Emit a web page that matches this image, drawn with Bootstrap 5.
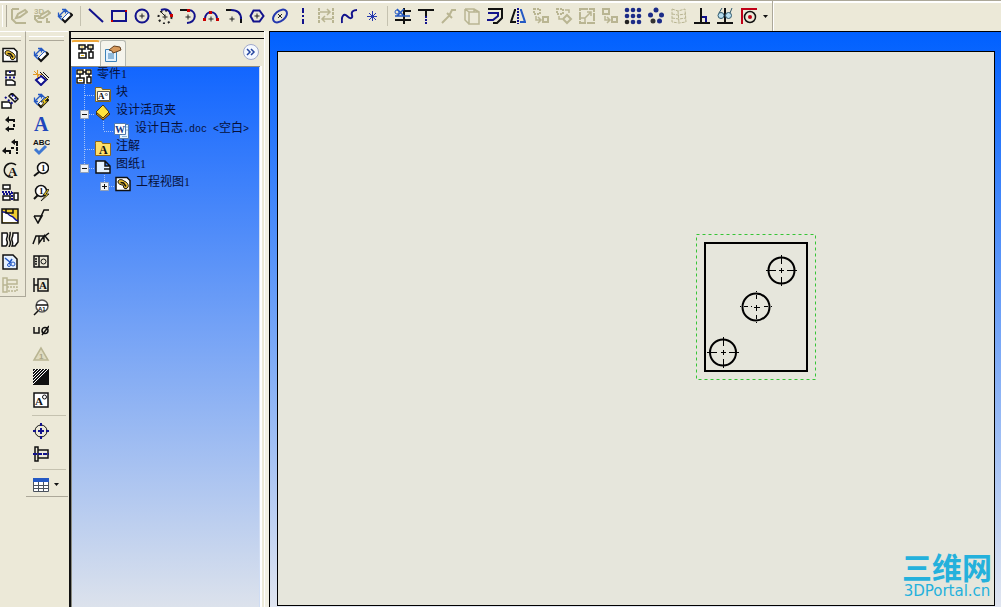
<!DOCTYPE html>
<html lang="zh-CN">
<head>
<meta charset="utf-8">
<meta name="viewport" content="width=device-width, initial-scale=1">
<title>零件1 - 工程图</title>
<link href="https://cdn.jsdelivr.net/npm/bootstrap@5.3.0/dist/css/bootstrap.min.css" rel="stylesheet">
<style>
:root{--face:#ece9d8;--shade:#aca899;--navy:#12128c;--off:#b9b592}
body{background:var(--face);font-family:"Liberation Sans","Noto Sans CJK SC",sans-serif;font-size:12px;color:#000}
svg{display:block;flex:none;fill:none;stroke:#111;stroke-width:1}
.topbar{height:31px;border-top:1px solid var(--shade);box-shadow:inset 0 2px #fff}
.topbar .tools{border-right:1px solid var(--shade);box-shadow:1px 0 #fff;padding-left:2px}
.grip-v{width:5px;border-left:1px solid #fff;border-right:1px solid var(--shade);margin:4px 0}
.grip-h{height:5px;border-top:1px solid #fff;border-bottom:1px solid var(--shade);margin:0 4px 2px 0}
.tool{width:23px;height:23px;padding:0;border:0;border-radius:0;display:flex;align-items:center;justify-content:center;flex:none}
.tool.wide{width:36px;gap:5px}
.rule-v{width:8px;flex:none;background:linear-gradient(#c5c2b0,#c5c2b0) center/1px 20px no-repeat}
.rule-h{height:8px;flex:none;background:linear-gradient(#c5c2b0,#c5c2b0) center/34px 1px no-repeat;width:100%}
.side{padding-top:4px;border-top:1px solid #fff;border-right:1px solid var(--shade);border-bottom:1px solid var(--shade)}
.side.first{width:26px}
.side.first .tool{width:20px}
.side.second{width:42px;padding-left:3px;border-right:0}
.off{stroke:var(--off);color:var(--off)}
.nv{stroke:var(--navy)}
.panel{width:197px;border-top:1px solid #000;border-left:2px solid #111;margin-left:1px;padding-top:6px}
.tabs{height:28px;border-top:1px solid #000;padding:1px 7px 0 0}
.tabs .tab{height:26px;width:26px;padding:0;border:1px solid #b5b8b0;border-bottom:0;border-radius:3px 3px 0 0;display:flex;align-items:center;justify-content:center;background:#f5f4ec}
.tabs .tab.active{width:29px;background:#fff;border-top:2px solid #efa83a;border-color:#efa83a #fff #fff;padding-bottom:5px}
.more{width:16px;height:16px;padding:0;border:0}
.tree-frame{border:solid #8b8b80;border-width:1px 0 0 1px;margin-right:6px;box-shadow:1px 0 #fff,2px 0 #fff}
.tree{background:linear-gradient(#1266ff,#dce2ec);border-right:1px solid #cfdcf3;padding-left:4px}
.tree .node{height:18px;line-height:17px;white-space:nowrap}
.tree .node a{color:#06103a;text-decoration:none;padding-left:5px;height:18px;margin-top:-2px}
.tree .half{font-family:"Liberation Mono",monospace;font-size:10px}
.tree .num{font-family:"Liberation Serif",serif}
.tree button{padding:0;border:0;background:none}
.viewport{border-top:1px solid #000;border-left:1px solid #000;background:linear-gradient(#0060ff,#e0e5f0);padding:19px 6px 1px 7px;margin-left:3px;box-shadow:-4px 0 #f2f0e4,-5px 0 #fff}
.sheet{background:#e6e6dc;border:1px solid #000}
.view{left:418px;top:182px}
.brand{right:2px;bottom:6px;color:#24b1dc;text-align:center}
.brand-cn{font:700 30px/34px "Noto Sans CJK SC",sans-serif}
.brand-en{font:15px/16px "DejaVu Sans",sans-serif}
text{font-family:"Liberation Sans",sans-serif;font-weight:700;stroke:none;fill:#111}
.serif{font-family:"Liberation Serif",serif}
</style>
</head>
<body class="vh-100 d-flex flex-column overflow-hidden">
<svg width="0" height="0" class="d-none" aria-hidden="true">
<symbol id="i-dim" viewBox="0 0 16 16"><path d="M5 11l7-7 3 3-7 7z" fill="#fff" stroke="#2459c4"/><path d="M5 11l3 3 7-7-2-2" stroke-width="2"/><path d="M1.500 8.500l7-7M1.500 8.500v-4M1.500 8.500h3.500M8.500 1.500H5M8.500 1.500v4M1 8l4 4M8 1l4 4" stroke="#2459c4" stroke-width="1.300"/></symbol>
<symbol id="i-sheet" viewBox="0 0 16 15"><path fill="#fff" stroke-width="1.500" d="M1 1h6v4H1zM10 1h5v4h-5zM1 9h7v5H1zM11 8h4v6h-4zM4 5v4M7 3h3M13 5v3"/><path stroke="#d7a700" d="M2.500 3h3M11.500 3h2M3 11.500h3"/></symbol>
<symbol id="i-model" viewBox="0 0 16 16"><path fill="#fff" d="M1 1.500h11l3 3v10H1z" stroke-width="1.500"/><path d="M3 6c0-3 4-3 6-1 3 1 5 4 4 6s-3 2-4 1L8 9C6 9 3 8 3 6z" fill="#ecc136"/><path d="M5.500 6.500l3 .5 2.500 3.500" stroke-width="1.500"/></symbol>
</svg>
<header class="topbar flex-shrink-0 d-flex">
<div class="tools d-flex align-items-center" role="toolbar" aria-label="草图">
<span class="grip-v align-self-stretch"></span>
<button class="btn tool" aria-label="草图"><svg class="off" width="18" height="18"><path stroke-width="2" d="M2 2v10l4 4h10M2 2h7M6 11l2-4 7-4 2 2-7 5z"/></svg></button>
<button class="btn tool" aria-label="3D草图"><svg class="off" width="18" height="18"><text x="1" y="7" font-size="8" style="fill:#b9b592">3D</text><path stroke-width="2" d="M1 9h5M2 9v3l3 3h4M6 11l2-3 7-4 2 2-7 5zM14 11v4h3"/></svg></button>
<button class="btn tool" aria-label="智能尺寸"><svg width="16" height="16"><use href="#i-dim"/></svg></button>
<span class="rule-v align-self-stretch"></span>
<button class="btn tool" aria-label="直线"><svg class="nv" width="16" height="16"><path stroke-width="2" d="M1 1l14 13"/></svg></button>
<button class="btn tool" aria-label="矩形"><svg class="nv" width="16" height="16"><path stroke-width="2" d="M1 3h14v10H1z"/><path fill="#c00" stroke="none" d="M0 12h2v2H0zM14 2h2v2h-2z"/></svg></button>
<button class="btn tool" aria-label="圆"><svg class="nv" width="16" height="16"><circle cx="8" cy="8" r="6.500" stroke-width="2"/><path stroke="#222" d="M5.500 8h5M8 5.500v5"/></svg></button>
<button class="btn tool" aria-label="圆心圆弧"><svg class="nv" width="16" height="16"><circle cx="8" cy="9" r="6.500" stroke="#222" stroke-width="2" stroke-dasharray="2 3"/><path stroke-width="2" d="M4 2c5-2 9 0 10 5"/><path stroke="#222" d="M3 3l5 5M5.500 9h5M8 6.500v5"/><path fill="#c00" stroke="none" d="M13 6h3v3h-3z"/></svg></button>
<button class="btn tool" aria-label="切线弧"><svg class="nv" width="16" height="16"><path stroke="#111" stroke-width="2" d="M0 2h8"/><path stroke-width="2" d="M9 2c8 1 8 12-2 13"/><path stroke="#222" d="M5.500 9h5M8 6.500v5"/><path fill="#c00" stroke="none" d="M7 1h3v3H7z"/></svg></button>
<button class="btn tool" aria-label="三点圆弧"><svg class="nv" width="16" height="16"><path stroke-width="2" d="M2 11c0-9 12-9 12 0"/><path stroke="#222" d="M5.500 11h5M8 8.500v5"/><path fill="#c00" stroke="none" d="M0 10h3v3H0zM13 10h3v3h-3zM6 3h3v3H6z"/></svg></button>
<button class="btn tool" aria-label="圆角"><svg class="nv" width="16" height="16"><path stroke="#111" stroke-width="2" d="M0 2h6M15 9v6"/><path stroke-width="2" d="M5 2c6 0 10 3 10 9"/><path stroke="#222" d="M3.500 11h5M6 8.500v5"/></svg></button>
<button class="btn tool" aria-label="多边形"><svg class="nv" width="16" height="16"><path stroke-width="2" d="M4.500 2.500h6l4 5.500-4 5.500h-6L1.500 8z"/><path stroke="#222" d="M5.500 8h5M8 5.500v5"/></svg></button>
<button class="btn tool" aria-label="椭圆"><svg class="nv" width="16" height="16"><ellipse cx="8" cy="8" rx="8" ry="5" stroke-width="2" stroke="#2438ae" transform="rotate(-40 8 8)"/><path stroke="#222" d="M6 6l4 4M10 6l-4 4"/></svg></button>
<button class="btn tool" aria-label="中心线"><svg class="nv" width="16" height="16"><path stroke-width="2" d="M8 0v16" stroke-dasharray="5 2 2 2"/></svg></button>
<button class="btn tool" aria-label="构造几何线"><svg class="off" width="18" height="18"><path stroke-width="2" d="M2 1v16M16 1v16" stroke-dasharray="3 1"/><path stroke-width="1.500" d="M3 5h10M10 2l3 3-3 3M15 12H5M8 9l-3 3 3 3"/></svg></button>
<button class="btn tool" aria-label="样条曲线"><svg class="nv" width="16" height="16"><path stroke-width="2" d="M1 15C0 8 3 5 6 8s6 3 5-1c-1-3 1-5 5-5"/></svg></button>
<button class="btn tool" aria-label="点"><svg class="nv" width="16" height="16"><path stroke="#2438ae" d="M8.500 3v10M3 8.500h10M5 5l7 7M12 5l-7 7"/></svg></button>
<span class="rule-v align-self-stretch"></span>
<button class="btn tool" aria-label="剪裁实体"><svg class="nv" width="18" height="16"><path stroke="#111" stroke-width="2" d="M10 3h7M1 12h16M10 0v16"/><path stroke="#2459c4" stroke-width="1.500" d="M3 1l7 7M10 1L3 8M1 8h15"/><circle cx="3" cy="4" r="2" stroke="#2459c4"/></svg></button>
<button class="btn tool" aria-label="延伸实体"><svg width="16" height="16"><path stroke-width="2" d="M0 2h16M8 2v6"/><path class="nv" stroke-width="2" d="M8 8v8" stroke-dasharray="2 1"/></svg></button>
<button class="btn tool" aria-label="分割实体"><svg class="off" width="16" height="16"><path stroke-width="2" d="M1 15l7-7 3-6h4M6 5l5 5"/></svg></button>
<button class="btn tool" aria-label="转换实体引用"><svg class="off" width="18" height="18"><path stroke-width="1.500" d="M6 5h10v12H6zM2 2h9l5 3M2 2v11l4 4M2 2l4 3M11 2v3"/></svg></button>
<button class="btn tool" aria-label="等距实体"><svg class="nv" width="18" height="18"><path stroke="#111" stroke-width="2" d="M2 2h14v9l-5 5H7"/><path stroke-width="2" d="M2 6h10v3l-5 4H1"/></svg></button>
<button class="btn tool" aria-label="镜向实体"><svg class="nv" width="16" height="16"><path stroke-width="2" stroke="#2459c4" d="M10 2h1l4 12h-5"/><path stroke="#111" stroke-width="2" d="M6 2H5L1 14h5"/><path stroke-width="2" d="M8 0v16" stroke-dasharray="2 1"/></svg></button>
<button class="btn tool" aria-label="移动实体"><svg class="off" width="18" height="18"><path stroke-width="2" d="M2 2h6v5H2z" stroke-dasharray="2 1"/><path stroke-width="2" d="M11 10h5v5h-5z"/><path stroke-width="1.500" d="M4 9v4h4M6 10l3 3-3 3"/></svg></button>
<button class="btn tool" aria-label="旋转实体"><svg class="off" width="18" height="18"><path stroke-width="2" d="M2 2h6v5H2z" stroke-dasharray="2 1"/><path stroke-width="2" d="M12 8l4 4-4 4-4-4z"/><path stroke-width="1.500" d="M10 3h4v3M4 9v3h3"/></svg></button>
<button class="btn tool" aria-label="缩放实体"><svg class="off" width="18" height="18"><path stroke-width="2" d="M2 2h14v14H2z" stroke-dasharray="8 1"/><path stroke-width="1.500" d="M2 11h5v5M7 11l6-6M9 5h4v4"/></svg></button>
<button class="btn tool" aria-label="复制实体"><svg class="off" width="18" height="18"><path stroke-width="2" d="M2 2h6v5H2zM11 10h5v5h-5z"/><path stroke-width="1.500" d="M4 9v4h4M6 10l3 3-3 3"/></svg></button>
<button class="btn tool" aria-label="线性阵列"><svg width="18" height="18" style="stroke:none;fill:#1c2c88"><circle cx="3" cy="3" r="2.300"/><circle cx="9" cy="3" r="2.300"/><circle cx="15" cy="3" r="2.300"/><circle cx="3" cy="9" r="2.300"/><circle cx="9" cy="9" r="2.300"/><circle cx="15" cy="9" r="2.300"/><circle cx="3" cy="15" r="2.300" fill="#222"/><circle cx="9" cy="15" r="2.300"/><circle cx="15" cy="15" r="2.300"/></svg></button>
<button class="btn tool" aria-label="圆周阵列"><svg width="18" height="18" style="stroke:none;fill:#1c2c88"><circle cx="9" cy="3" r="2.500"/><circle cx="3.500" cy="8" r="2.500"/><circle cx="14.500" cy="8" r="2.500"/><circle cx="6" cy="14" r="2.500" fill="#333"/><circle cx="12.500" cy="14" r="2.500"/></svg></button>
<button class="btn tool" aria-label="修改草图"><svg class="off" width="18" height="18"><path stroke-dasharray="3 1" d="M2 2l6 2 7-2 1 13-7 1-7-1zM8 4l1 12M2 7l6 1 8-1M2 11l7 1 7-1"/></svg></button>
<button class="btn tool" aria-label="添加几何关系"><svg width="18" height="18"><path stroke-width="2" d="M8 1v14M1 16h16"/><path class="nv" stroke="#2459c4" stroke-width="2" d="M9 10h4v5"/></svg></button>
<button class="btn tool" aria-label="显示几何关系"><svg width="18" height="18"><path stroke-width="2" d="M9 1v14M1 16h16"/><circle cx="5" cy="8.500" r="3" fill="#b9dff0" stroke="#31586b"/><circle cx="12.500" cy="8.500" r="3" fill="#b9dff0" stroke="#31586b"/><path stroke="#31586b" d="M3 6l3-5M14 6l2-5"/></svg></button>
<button class="btn tool wide" aria-label="快速捕捉"><svg width="18" height="18"><path stroke="#c00018" stroke-width="2" d="M17 2H2v15"/><circle cx="10" cy="10" r="5.500" stroke-width="1.500"/><circle cx="10" cy="10" r="2" fill="#c00018" stroke="none"/></svg><svg width="5" height="3"><path d="M0 0h5L2.500 3z" fill="#111" stroke="none"/></svg></button>
</div>
</header>
<main class="d-flex flex-grow-1">
<div class="side first align-self-start" role="toolbar" aria-label="工程图">
<div class="grip-h"></div>
<div class="d-flex flex-column">
<button class="btn tool" aria-label="模型视图"><svg width="16" height="16"><use href="#i-model"/></svg></button>
<button class="btn tool" aria-label="投影视图"><svg width="16" height="16"><path fill="#fff" stroke-width="1.500" d="M4 1h9v4H4zM4 10h6l3 2v3H4z"/><path d="M8 1v4M3 7.500h12" class="nv" stroke-width="2" stroke-dasharray="2 2"/></svg></button>
<button class="btn tool" aria-label="辅助视图"><svg width="18" height="16"><path fill="#fff" stroke-width="1.500" d="M8 3l3-3 6 6-3 3zM1 9h7l2 2v4H1z"/><path class="nv" stroke-width="2" stroke-dasharray="2 2" d="M4 4l9 8M11 2l4 4"/></svg></button>
<button class="btn tool" aria-label="剖面视图"><svg width="16" height="16"><path stroke-width="2" d="M5 4h7v9H5" stroke-dasharray="9 2 3 2"/><path d="M7 0v7L3 4zM7 10v6l-4-3z" fill="#111" stroke="none"/></svg></button>
<button class="btn tool" aria-label="旋转剖视图"><svg width="18" height="16"><path stroke-width="2" d="M4 12h4M9 15v-4M10 9h3M16 3v12" stroke-dasharray="4 1"/><path d="M1 12l4-4v7zM10 3l4-3v6zM14 2h3v2h-3z" fill="#111" stroke="none"/></svg></button>
<button class="btn tool" aria-label="局部视图"><svg width="18" height="18"><path stroke-width="1.500" d="M15 4A7 7 0 1 0 12 16"/><text class="serif" x="7" y="15" font-size="13">A</text></svg></button>
<button class="btn tool" aria-label="标准三视图"><svg width="18" height="18"><path fill="#fff" stroke-width="1.500" d="M2 1h7v4H2zM2 12h7v4H2zM13 9h4v7h-4z"/><path class="nv" stroke-width="2" stroke-dasharray="2 1" d="M1 8h10M11 8v9M2 10h8"/></svg></button>
<button class="btn tool" aria-label="断开的剖视图"><svg width="18" height="16"><path fill="#f0cc30" stroke-width="1.500" d="M1 1h16v14H1z"/><path fill="#fff" stroke="none" d="M2 4l6 1 8 7v2H2z"/><path class="nv" stroke-width="1.500" d="M1 4c7-1 5 3 9 4s3 4 7 5"/><path stroke-width="1.500" d="M5 1v4h7V1"/></svg></button>
<button class="btn tool" aria-label="断裂视图"><svg width="18" height="16"><path fill="#fff" stroke-width="1.500" d="M1 2h5c2 4-2 5 0 8 1 3 0 4-1 5H1zM12 2h5v9l-3 4h-3c2-4-1-5 0-8 1-2 1-3 1-5zM9 1c1 4-2 5 0 9 1 3 0 4-1 6"/></svg></button>
<button class="btn tool" aria-label="剪裁视图"><svg width="16" height="16"><path fill="#e6f2ff" stroke-width="1.500" d="M1 1h10l4 4v10H1z"/><path stroke="#2459c4" stroke-width="1.500" d="M3 4l6 5M10 5L7 10"/><circle cx="11" cy="10" r="2" stroke="#2459c4"/><circle cx="7" cy="11" r="1.500" stroke="#2459c4"/></svg></button>
<button class="btn tool" aria-label="交替位置视图"><svg class="off" width="18" height="18"><path stroke-width="1.500" d="M2 2h4v14H2zM2 9h4M6 4h10v4H6z"/><path d="M6 11h10v4H6" stroke-width="1.500" stroke-dasharray="2 1"/></svg></button>
</div>
</div>
<div class="side second align-self-start" role="toolbar" aria-label="注解">
<div class="grip-h"></div>
<div class="d-flex flex-column">
<button class="btn tool" aria-label="智能尺寸标注"><svg width="16" height="16"><use href="#i-dim"/></svg></button>
<button class="btn tool" aria-label="模型项目"><svg width="16" height="16"><path d="M3 10l5-4 5 4-5 5z" fill="#fff" class="nv" stroke-width="2"/><path stroke="#e39a24" d="M4.500 0v8M0 4.500h9M1 1l6 6"/><path d="M7 2l8 8M10 2l6 6"/></svg></button>
<button class="btn tool" aria-label="自动标注尺寸"><svg width="16" height="16"><use href="#i-dim"/><path d="M15 3L8 9h3l-4 6 8-7h-3l4-4z" fill="#ffdc28" stroke-width=".7"/></svg></button>
<button class="btn tool" aria-label="注释"><svg width="18" height="22"><text class="serif" x="2" y="18" font-size="20" style="fill:#2046bc">A</text></svg></button>
<button class="btn tool" aria-label="拼写检验程序"><svg width="18" height="20"><text x="1" y="8" font-size="8">ABC</text><path stroke="#3f78d2" stroke-width="3" d="M3 12l4 4 7-7"/></svg></button>
<button class="btn tool" aria-label="零件序号"><svg width="16" height="18"><circle cx="10" cy="7" r="5.500" stroke-width="1.500" fill="#fff"/><path d="M6 11l-5 4" stroke-width="2"/><text class="serif" x="8" y="10" font-size="9">1</text></svg></button>
<button class="btn tool" aria-label="自动零件序号"><svg width="16" height="18"><circle cx="8" cy="7" r="5.500" stroke-width="1.500" fill="#fff"/><path d="M5 11l-4 4" stroke-width="2"/><text class="serif" x="6" y="10" font-size="9">1</text><path d="M15 5l-5 6h3l-5 6 8-7h-3l3-4z" fill="#ffdc28" stroke-width=".8"/></svg></button>
<button class="btn tool" aria-label="表面粗糙度符号"><svg width="16" height="16"><path stroke-width="1.500" d="M1 8h8L5 15 1 8M5 15l6-13h5"/></svg></button>
<button class="btn tool" aria-label="焊接符号"><svg width="18" height="16"><path stroke-width="1.500" d="M1 13l3-8h10M7 5v7l5-7v6M17 2l-4 3 4 5"/></svg></button>
<button class="btn tool" aria-label="形位公差"><svg width="16" height="14"><path stroke-width="1.500" d="M1 1h14v11H1zM6 1v11M2 4h2M2 6.500h2M2 9h2"/><circle cx="10.500" cy="6.500" r="2.500"/></svg></button>
<button class="btn tool" aria-label="基准特征"><svg width="18" height="16"><path stroke-width="1.500" d="M2 1v14M2 8h4M6 2h10v12H6z"/><text class="serif" x="7" y="12" font-size="11">A</text></svg></button>
<button class="btn tool" aria-label="基准目标"><svg width="16" height="18"><circle cx="9" cy="7" r="6" fill="#fff" stroke="#555" stroke-width="1.500"/><path d="M3 6h12M5 12l-4 4" stroke-width="1.500"/><text x="5" y="12" font-size="6">A1</text></svg></button>
<button class="btn tool" aria-label="孔标注"><svg width="16" height="14"><path stroke-width="1.500" d="M1 3v6h5V3M9 11l7-9"/><circle cx="12" cy="6.500" r="3" stroke-width="1.500"/></svg></button>
<button class="btn tool" aria-label="修订符号"><svg class="off" width="18" height="16"><path d="M9 2L2 14h14z" fill="#dfdbc0" stroke-width="1.500"/><text x="7" y="13" font-size="8" style="fill:#a9a588">1</text></svg></button>
<button class="btn tool" aria-label="区域剖面线"><svg width="16" height="16"><path fill="#111" stroke="none" d="M0 0h16v16H0z"/><path stroke="#fff" d="M0 3l3-3M0 6l6-6M0 9l9-9M0 12l12-12M0 15L15 0"/></svg></button>
<button class="btn tool" aria-label="块"><svg width="16" height="16"><path fill="#fff" stroke-width="1.500" d="M1 1h14v14H1z"/><text class="serif" x="2" y="13" font-size="11">A</text><circle cx="11.500" cy="5" r="2"/></svg></button>
<span class="rule-h"></span>
<button class="btn tool" aria-label="中心符号线"><svg width="16" height="16"><circle cx="8" cy="8" r="6"/><path class="nv" stroke-width="2" d="M8 0v3M8 13v3M0 8h3M13 8h3M5 8h6M8 5v6"/></svg></button>
<button class="btn tool" aria-label="中心线标注"><svg width="16" height="16"><path stroke-width="1.500" d="M2 1h3v14H2zM5 4h10v8H5"/><path class="nv" stroke-width="2" stroke-dasharray="4 1" d="M0 8h16"/></svg></button>
<span class="rule-h"></span>
<button class="btn tool wide ps-1 justify-content-start" aria-label="表格"><svg width="16" height="14"><path fill="#fff" stroke="#4b535e" d="M.5.500h15v13H.5zM.5 7.500h15M.5 10.500h15M5.500 3v11M10.500 3v11"/><path fill="#2459c4" stroke="none" d="M0 0h16v4H0z"/></svg><svg width="5" height="3"><path d="M0 0h5L2.500 3z" fill="#111" stroke="none"/></svg></button>
</div>
</div>
<aside class="panel flex-shrink-0 d-flex flex-column">
<div class="tabs d-flex flex-shrink-0">
<button class="btn tab active" aria-label="设计树"><svg width="16" height="15"><use href="#i-sheet"/></svg></button>
<button class="btn tab" aria-label="属性"><svg width="18" height="18"><path fill="#e2f2ff" stroke="#3e82b8" d="M1.500 4.500h11v12h-11zM4 9h6M4 11h6M4 13h6"/><path fill="#d89a5c" stroke="#65401f" d="M5 5l5-4 6 1 1 3-5 2-3 1-1-2z"/></svg></button>
<button class="btn more ms-auto mt-1" aria-label="展开"><svg width="16" height="16"><circle cx="8" cy="8" r="7.500" fill="#f5f9ff" stroke="#a0a9cc"/><path stroke="#2546a0" stroke-width="1.500" d="M4 5l3 3-3 3M8 5l3 3-3 3"/></svg></button>
</div>
<div class="tree-frame flex-grow-1 d-flex">
<nav class="tree flex-grow-1" aria-label="设计树">
<div class="node d-flex align-items-center"><svg width="16" height="15"><path fill="#fff" stroke="none" d="M0 0h16v15H0z"/><use href="#i-sheet"/></svg><a href="#">零件<span class="num">1</span></a></div>
<div class="node d-flex align-items-center"><svg width="19" height="18"><path stroke="#a7c4f5" stroke-dasharray="1 1" d="M8.500 0v18M9 10.500h10"/></svg><svg width="16" height="16"><path fill="#ffeeb1" stroke="#81651d" d="M.5 3.500v-2h6l1 2h8v12H.5z"/><path fill="#fff" stroke="#555" d="M2.500 5.500h12v9h-12z"/><text class="serif" x="3" y="13" font-size="9">A°</text></svg><a href="#">块</a></div>
<div class="node d-flex align-items-center"><button aria-label="折叠设计活页夹"><svg width="19" height="18"><path stroke="#a7c4f5" stroke-dasharray="1 1" d="M8.500 0v18M9 11.500h10"/><path fill="#eef1f5" stroke="#91a0b8" d="M4.500 7.500h8v8h-8z"/><path d="M6 11.500h5"/></svg></button><svg width="16" height="18"><path fill="#d98f12" stroke="#453309" d="M1 11l7-7 7 7-7 6z"/><path fill="#ffe33c" stroke="#453309" d="M1 9l7-7 6 7-6 6z"/></svg><a href="#">设计活页夹</a></div>
<div class="node d-flex align-items-center"><svg width="38" height="18"><path stroke="#a7c4f5" stroke-dasharray="1 1" d="M8.500 0v18M27.500 0v10M28 10.500h10"/></svg><svg width="16" height="18"><path fill="#e7f4ff" stroke="#527bac" d="M5.500 3.500h9v14h-9z"/><path fill="#fff" stroke="#527bac" d="M.5 2.500h11v11H.5z"/><path stroke="#88b4dc" d="M12 6h2M12 9h2M8 15.500h5"/><text class="serif" x="1" y="12" font-size="10" style="fill:#183b88">W</text></svg><a href="#">设计日志<span class="half">.doc &lt;</span>空白<span class="half">&gt;</span></a></div>
<div class="node d-flex align-items-center"><svg width="19" height="18"><path stroke="#a7c4f5" stroke-dasharray="1 1" d="M8.500 0v18M9 10.500h10"/></svg><svg width="16" height="16"><path fill="#ffdf69" stroke="#8d681d" d="M.5 3.500v-2h6l1 2h8v12H.5z"/><text class="serif" x="4" y="14" font-size="12">A</text></svg><a href="#">注解</a></div>
<div class="node d-flex align-items-center"><button aria-label="折叠图纸1"><svg width="19" height="18"><path stroke="#a7c4f5" stroke-dasharray="1 1" d="M8.500 0v8M9 11.500h10"/><path fill="#eef1f5" stroke="#91a0b8" d="M4.500 7.500h8v8h-8z"/><path d="M6 11.500h5"/></svg></button><svg width="16" height="16"><path fill="#e6f2ff" stroke-width="1.500" d="M1 3h9l5 5v7H1zM10 3v5h5M9 11h6"/></svg><a href="#">图纸<span class="num">1</span></a></div>
<div class="node d-flex align-items-center ps-3"><button class="ms-1" aria-label="展开工程视图1"><svg width="19" height="18"><path stroke="#a7c4f5" stroke-dasharray="1 1" d="M8.500 0v8M9 11.500h10"/><path fill="#eef1f5" stroke="#91a0b8" d="M4.500 7.500h8v8h-8z"/><path d="M6 11.500h5M8.500 9v5"/></svg></button><svg width="16" height="16"><use href="#i-model"/></svg><a href="#">工程视图<span class="num">1</span></a></div>
</nav>
</div>
</aside>
<section class="viewport flex-grow-1 d-flex">
<div class="sheet position-relative flex-grow-1">
<svg class="view position-absolute" width="120" height="146" role="img" aria-label="工程视图1">
<path stroke="#36c436" stroke-dasharray="3 3" d="M.5.500h119v145H.5z"/>
<path stroke="#000" stroke-width="2" d="M9 9h102v128H9z"/>
<g stroke="#000"><g stroke-width="2"><circle cx="85.500" cy="36.500" r="13"/><circle cx="60" cy="73" r="13.500"/><circle cx="27" cy="118.500" r="13"/></g>
<path d="M70 36.500h10M83 36.500h5M91 36.500h10M85.500 21v9M85.500 34v5M85.500 43v9"/>
<path d="M11 118.500h10M25 118.500h5M33 118.500h10M27.500 103v9M27.500 116v5M27.500 125v9"/>
<path d="M58 73.500h6M60.500 71v6"/><path stroke-dasharray="1 3 4 3" d="M44 72.500h12M76 72.500H66M60.500 57v11M60.500 89V79"/></g>
</svg>
<div class="brand position-absolute"><div class="brand-cn">三维网</div><div class="brand-en">3DPortal.cn</div></div>
</div>
</section>
</main>
<script src="https://cdn.jsdelivr.net/npm/bootstrap@5.3.0/dist/js/bootstrap.bundle.min.js"></script>
</body>
</html>
